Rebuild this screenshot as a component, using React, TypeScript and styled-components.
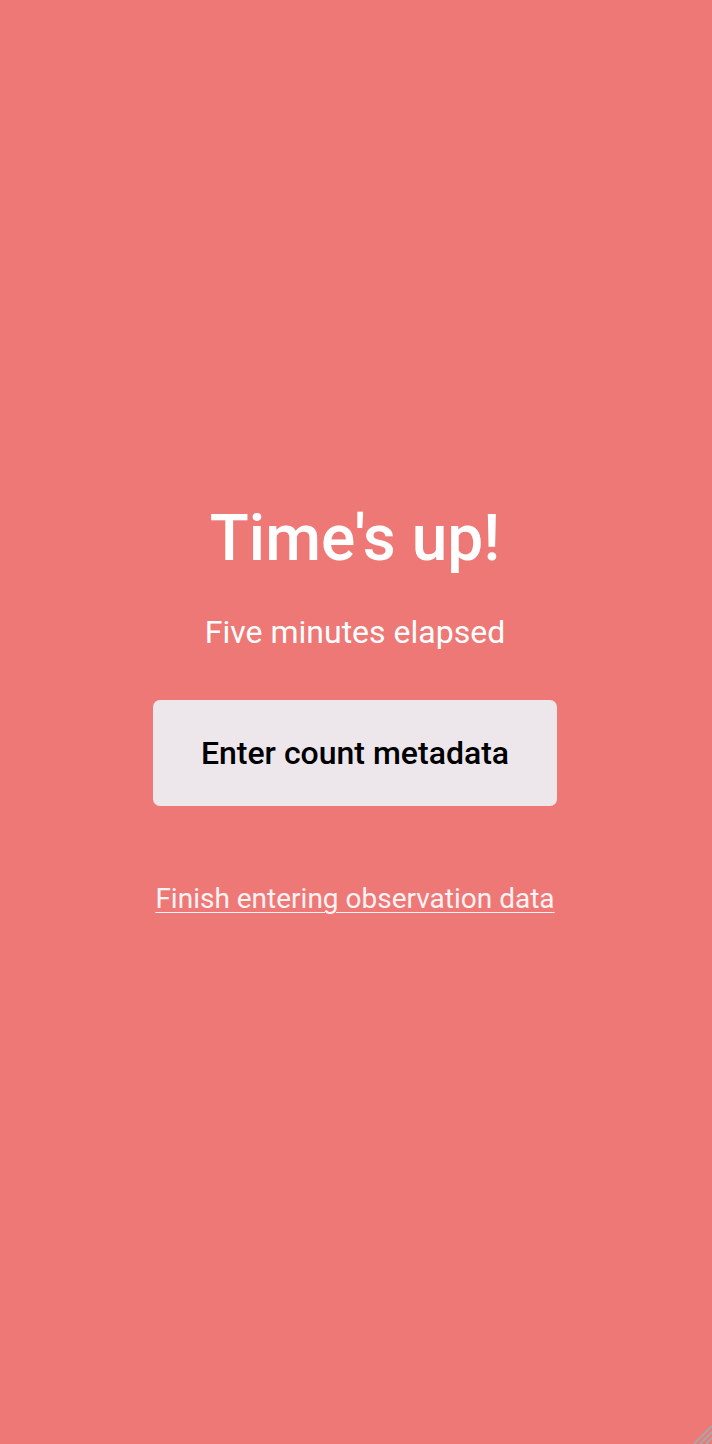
import React from "react";
import styled, { createGlobalStyle } from "styled-components";

const Global = createGlobalStyle`
  html, body { margin: 0; padding: 0; height: 100%; }
  body { background: #ee7876; font-family: Roboto, "Liberation Sans", sans-serif; }
  #root { height: 100%; }
`;

const Screen = styled.main`
  position: relative;
  height: 1444px;
  background: #ee7876;
  display: flex;
  flex-direction: column;
  align-items: center;
  justify-content: center;
  padding: 0 2px 28px 0;
  box-sizing: border-box;
  color: #ffffff;
  overflow: hidden;
`;

const Title = styled.h1`
  margin: 0;
  font-size: 64px;
  font-weight: 500;
  line-height: 1.2;
`;

const Subtitle = styled.p`
  margin: 35px 0 0;
  font-size: 32px;
  font-weight: 400;
  line-height: 1.2;
`;

const PrimaryButton = styled.button`
  margin-top: 48px;
  width: 404px;
  height: 106px;
  border: none;
  border-radius: 7px;
  background: #ede7ec;
  color: #000000;
  font-family: Roboto, "Liberation Sans", sans-serif;
  font-size: 32px;
  font-weight: 500;
  cursor: pointer;
`;

const TextLink = styled.a`
  margin-top: 76px;
  color: #fff2f3;
  font-size: 28px;
  text-decoration: underline;
  text-underline-offset: 4px;
  text-decoration-thickness: 1px;
`;

const Grip = styled.svg`
  position: absolute;
  right: 0;
  bottom: 0;
`;

export default function App() {
  return (
    <>
      <Global />
      <Screen>
        <Title>Time's up!</Title>
        <Subtitle>Five minutes elapsed</Subtitle>
        <PrimaryButton>Enter count metadata</PrimaryButton>
        <TextLink href="#">Finish entering observation data</TextLink>
        <Grip width="24" height="24" viewBox="0 0 24 24">
          <path d="M24 6 L6 24 M24 12 L12 24 M24 18 L18 24" stroke="#a7a7a7" strokeWidth="2" />
        </Grip>
      </Screen>
    </>
  );
}
